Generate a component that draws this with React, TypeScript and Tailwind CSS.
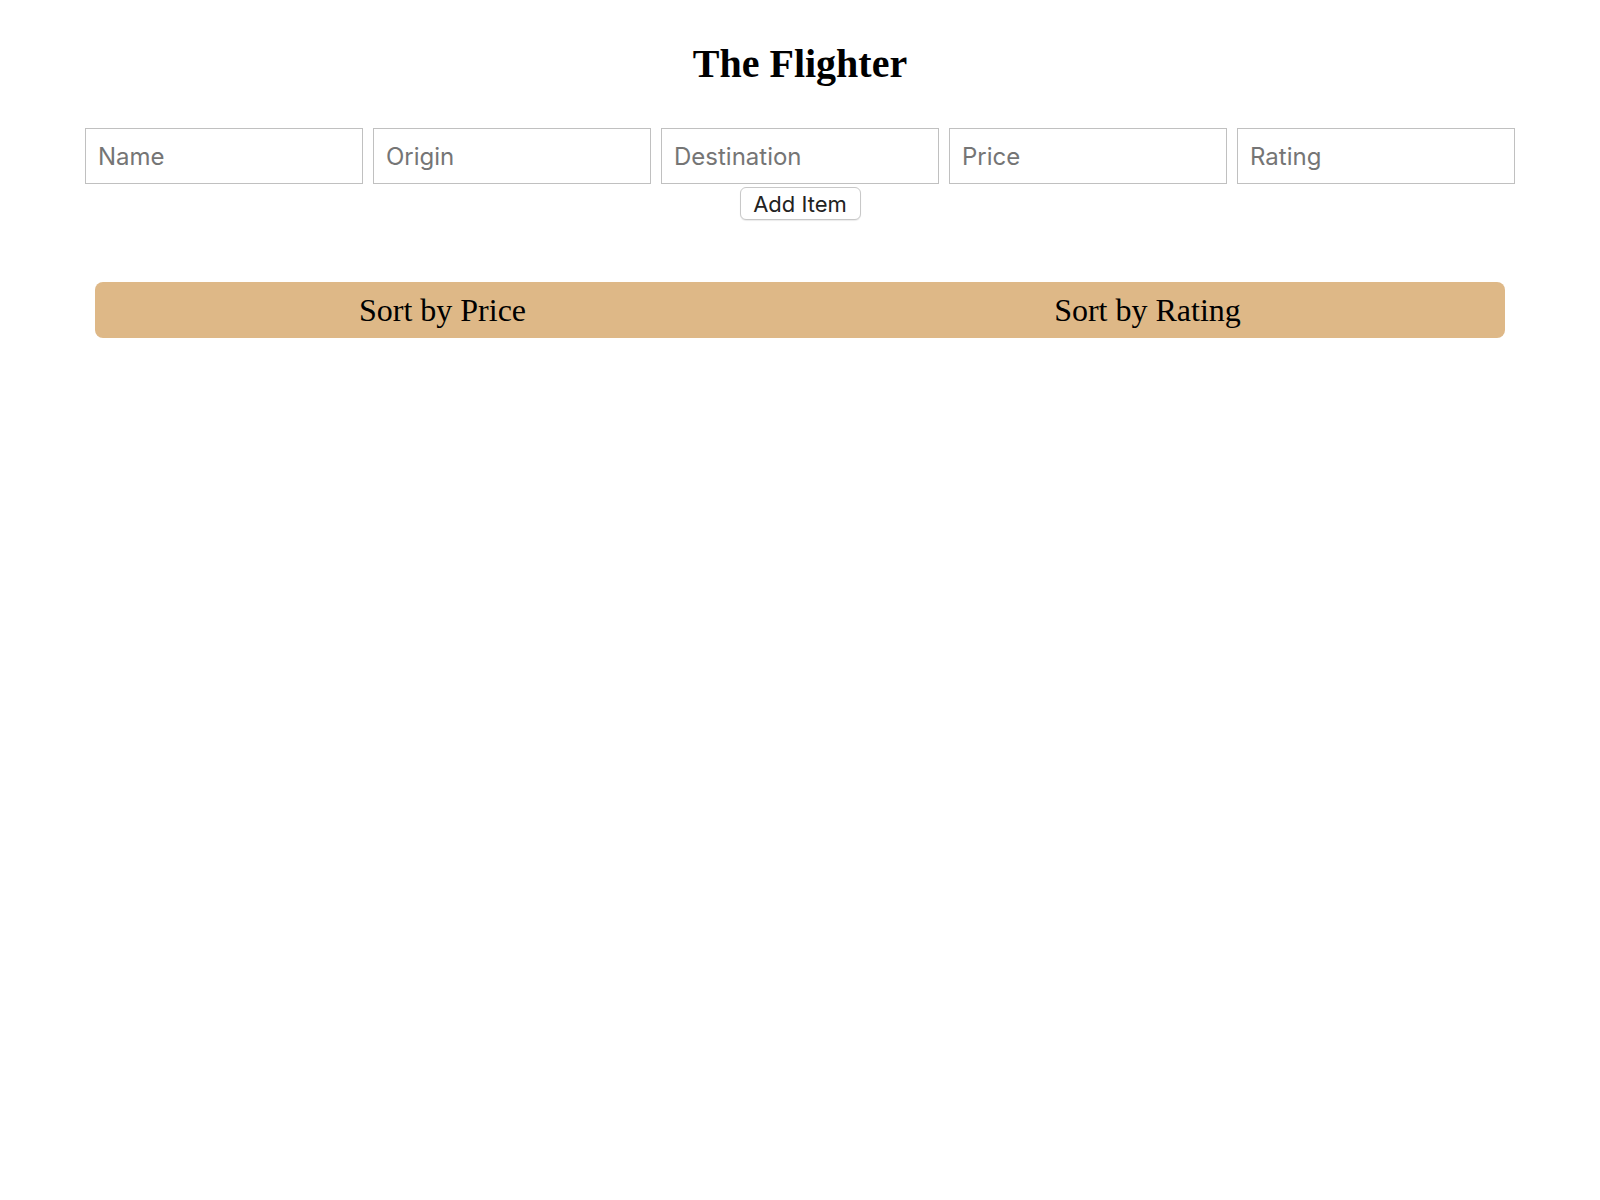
import { useState } from 'react';

const fields = ['Name', 'Origin', 'Destination', 'Price', 'Rating'];

export default function App() {
  const [values, setValues] = useState<Record<string, string>>({});

  return (
    <div className="min-h-[1200px] bg-white text-black">
      <h1 className="pt-[42px] text-center text-[40px] leading-[44px] font-bold font-['Liberation_Serif',serif]">
        The Flighter
      </h1>

      <div className="mt-[42px] flex justify-center gap-[10px]">
        {fields.map(f => (
          <input
            key={f}
            className="w-[278px] h-[56px] border border-[#c0c0c0] bg-white px-[12px] text-[24px] text-black placeholder:text-[#757575] font-['Inter',sans-serif] outline-none"
            placeholder={f}
            value={values[f] ?? ''}
            onChange={e => setValues({ ...values, [f]: e.target.value })}
          />
        ))}
      </div>

      <div className="mt-[3px] flex justify-center">
        <button className="w-[121px] h-[33px] border border-[#c8c8c8] rounded-[6px] bg-white text-[22px] text-[#222] font-['Inter',sans-serif] shadow-[0_1px_1px_rgba(0,0,0,0.08)]">
          Add Item
        </button>
      </div>

      <div className="mt-[62px] mx-auto w-[1410px] h-[56px] flex bg-[#DEB887] rounded-[8px] font-['Liberation_Serif',serif]">
        <button className="flex-1 pr-[10px] text-[32px] leading-none">Sort by Price</button>
        <button className="flex-1 pr-[10px] text-[32px] leading-none">Sort by Rating</button>
      </div>
    </div>
  );
}
